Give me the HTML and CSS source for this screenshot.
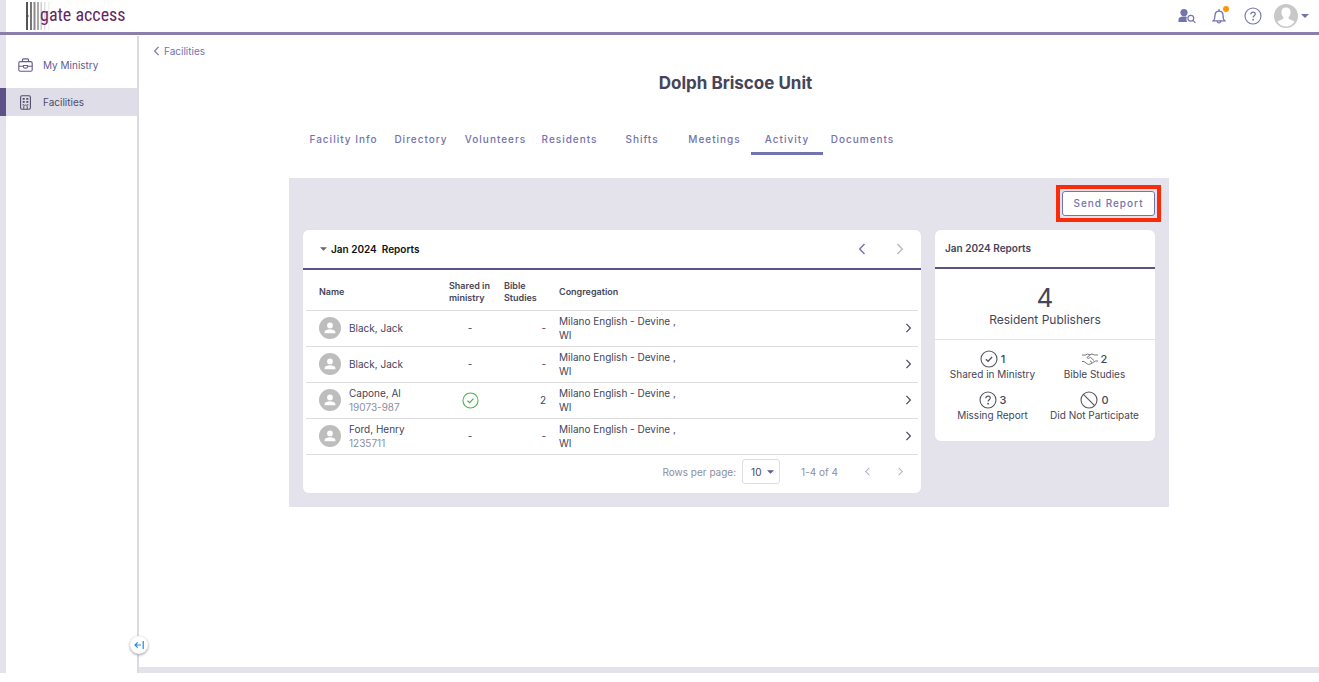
FILE: index.html
```html
<!DOCTYPE html>
<html lang="en">
<head>
<meta charset="utf-8">
<title>Dolph Briscoe Unit - gate access</title>
<link rel="stylesheet" href="styles.css">
</head>
<body>
<svg class="defs" width="0" height="0" aria-hidden="true">
  <symbol id="person" viewBox="0 0 22 22"><circle cx="11" cy="11" r="11" fill="#bdbdbd"/><circle cx="11" cy="8.4" r="2.9" fill="#fff"/><path d="M5.6 16.3v-1.2c0-2 3.6-2.9 5.4-2.9s5.4.9 5.4 2.9v1.2z" fill="#fff"/></symbol>
  <symbol id="left" viewBox="0 0 8 12"><path d="M6.5 1 1.7 6l4.8 5" fill="none" stroke="currentColor" stroke-width="1.4"/></symbol>
  <symbol id="right" viewBox="0 0 8 12"><path d="M1.5 1l4.8 5-4.8 5" fill="none" stroke="currentColor" stroke-width="1.4"/></symbol>
  <symbol id="down" viewBox="0 0 8 4"><path d="M0 0h8L4 4z" fill="currentColor"/></symbol>
  <symbol id="check" viewBox="0 0 18 18"><g fill="none" stroke="currentColor"><circle cx="9" cy="9" r="8" stroke-width="1.1"/><path d="M5.8 9.2l2.3 2.1 4-4.3" stroke-width="1.3"/></g></symbol>
  <symbol id="help" viewBox="0 0 18 18"><g fill="none" stroke="currentColor"><circle cx="9" cy="9" r="8" stroke-width="1.1"/><path d="M6.8 7.3c.1-1.4 1-2.2 2.3-2.2s2.2.8 2.2 1.9c0 1.7-2.2 1.7-2.2 3.5" stroke-width="1.2"/></g><circle cx="9.1" cy="12.7" r=".9" fill="currentColor"/></symbol>
</svg>
<header class="topbar">
  <div class="logo">
    <svg class="logo-bars" width="26" height="28" viewBox="0 0 26 28" aria-hidden="true"><path d="M0 0h2v13l1 1-1 1v13H0z" fill="#555"/><path d="M4 0h2v28H4z" fill="#777"/><path d="M7.500 0h2v28h-2z" fill="#8b8b8b"/><path d="M11 0h2v28h-2z" fill="#aaa"/><path d="M14.500 0h1.500v28h-1.500z" fill="#ccc"/><path d="M18 0h1.500v28H18z" fill="#e0e0e0"/><path d="M22 0h1.500v28H22z" fill="#f0f0f0"/></svg>
    <span class="logo-text">gate access</span>
  </div>
  <div class="actions">
    <button class="icon-button" aria-label="Find person"><svg width="18" height="16" viewBox="0 0 18 16"><circle cx="6" cy="4.600" r="3.600" fill="currentColor"/><path d="M.5 14v-2.400C.5 9.500 2.600 8.600 5 8.600h2.500c.8 0 1.200.2 1.600.5-1 1.600-.8 3.400.1 4.900z" fill="currentColor"/><g fill="none" stroke="currentColor" stroke-width="1.200"><circle cx="12.800" cy="10.300" r="2.900"/><path d="M14.900 12.400l2.500 2.500"/></g></svg></button>
    <button class="icon-button bell" aria-label="Notifications"><svg width="14" height="17" viewBox="0 0 14 17"><path d="M1.200 12.800c1.600-1.200 1.800-2.600 1.800-5.300C3 4.800 4.500 3.100 7 3.100s4 1.700 4 4.400c0 2.700.2 4.100 1.800 5.300zM7 3V1M5.300 13.500c.2 1.900 3.200 1.900 3.400 0" fill="none" stroke="currentColor" stroke-width="1.300"/></svg><span class="dot"></span></button>
    <button class="icon-button" aria-label="Help"><svg width="18" height="18"><use href="#help"/></svg></button>
    <button class="account" aria-label="Account"><svg width="24" height="24" viewBox="0 0 24 24"><circle cx="12" cy="12" r="12" fill="#c8c8c8"/><path d="M12 3.500c3 0 4.600 2 4.600 4.600 0 2-.7 4-2 5.200v1.500l6 2.700c-2 3.500-5 5-8.600 5s-6.600-1.500-8.600-5l6-2.700v-1.500c-1.300-1.200-2-3.200-2-5.200 0-2.600 1.600-4.600 4.600-4.600z" fill="#fff"/></svg><svg width="8" height="4"><use href="#down"/></svg></button>
  </div>
</header>
<div class="shell">
  <nav class="sidebar" aria-label="Main">
    <a class="nav-link" href="#"><svg width="15" height="14" viewBox="0 0 15 14"><g fill="none" stroke="currentColor" stroke-width="1.100"><rect x=".8" y="3.600" width="13.400" height="9.600" rx="1.400"/><path d="M4.500 3.500V2c0-.7.300-1.100 1-1.100h4c.7 0 1 .4 1 1.100v1.500M.8 8.200h4.500m4.400 0h4.500M5.500 7.500h4v1.700c0 1.200-4 1.200-4 0z"/></g></svg>My Ministry</a>
    <a class="nav-link active" href="#"><svg width="15" height="15" viewBox="0 0 15 15"><rect x="2.600" y=".8" width="9.800" height="13.400" rx="1.400" fill="none" stroke="currentColor" stroke-width="1.100"/><path d="M4.700 3h2v1.700h-2zM8.300 3h2v1.700h-2zM4.700 6h2v1.700h-2zM8.300 6h2v1.700h-2zM4.700 9h1v1.500h-1zM9.300 9h1v1.500h-1z" fill="currentColor"/><path d="M5.800 14v-2.500c0-2 3.400-2 3.400 0V14" fill="none" stroke="currentColor"/></svg>Facilities</a>
    <button class="collapse" aria-label="Collapse menu"><svg width="10" height="8" viewBox="0 0 10 8"><path d="M7 4H1m2.700-2.700L1 4l2.700 2.700M9.200 0v8" fill="none" stroke="currentColor" stroke-width="1.200"/></svg></button>
  </nav>
  <main class="main">
    <a class="back" href="#"><svg width="7" height="10"><use href="#left"/></svg>Facilities</a>
    <h1 class="title">Dolph Briscoe Unit</h1>
    <nav class="tabs" aria-label="Facility">
      <a href="#">Facility Info</a><a href="#">Directory</a><a href="#">Volunteers</a><a href="#">Residents</a><a href="#">Shifts</a><a href="#">Meetings</a><a class="current" href="#">Activity</a><a href="#">Documents</a>
    </nav>
    <section class="panel">
      <div class="toolbar"><div class="highlight"><button class="send">Send Report</button></div></div>
      <div class="cards">
        <section class="card reports">
          <div class="card-head">
            <svg class="caret" width="7" height="4"><use href="#down"/></svg>
            <h2>Jan 2024 &nbsp;Reports</h2>
            <button class="month prev" aria-label="Previous month"><svg width="8" height="12"><use href="#left"/></svg></button>
            <button class="month" aria-label="Next month" disabled><svg width="8" height="12"><use href="#right"/></svg></button>
          </div>
          <div class="table-wrap">
            <table>
              <colgroup><col class="c-name"><col class="c-shared"><col class="c-bible"><col class="c-cong"><col></colgroup>
              <thead><tr><th scope="col">Name</th><th scope="col">Shared in<br>ministry</th><th scope="col">Bible<br>Studies</th><th scope="col">Congregation</th><td></td></tr></thead>
              <tbody>
                <tr><td><div class="person"><svg width="22" height="22"><use href="#person"/></svg><span>Black, Jack</span></div></td><td class="shared">-</td><td class="studies">-</td><td>Milano English - Devine ,<br>WI</td><td class="open"><button aria-label="Open"><svg width="7" height="10"><use href="#right"/></svg></button></td></tr>
                <tr><td><div class="person"><svg width="22" height="22"><use href="#person"/></svg><span>Black, Jack</span></div></td><td class="shared">-</td><td class="studies">-</td><td>Milano English - Devine ,<br>WI</td><td class="open"><button aria-label="Open"><svg width="7" height="10"><use href="#right"/></svg></button></td></tr>
                <tr><td><div class="person"><svg width="22" height="22"><use href="#person"/></svg><span>Capone, Al<br><small>19073-987</small></span></div></td><td class="shared"><svg class="green" width="17" height="17"><use href="#check"/></svg></td><td class="studies">2</td><td>Milano English - Devine ,<br>WI</td><td class="open"><button aria-label="Open"><svg width="7" height="10"><use href="#right"/></svg></button></td></tr>
                <tr><td><div class="person"><svg width="22" height="22"><use href="#person"/></svg><span>Ford, Henry<br><small>1235711</small></span></div></td><td class="shared">-</td><td class="studies">-</td><td>Milano English - Devine ,<br>WI</td><td class="open"><button aria-label="Open"><svg width="7" height="10"><use href="#right"/></svg></button></td></tr>
              </tbody>
            </table>
          </div>
          <div class="pager">
            <label for="rows">Rows per page:</label>
            <span class="select"><select id="rows"><option>10</option><option>25</option></select><svg width="7" height="4"><use href="#down"/></svg></span>
            <span class="range">1-4 of 4</span>
            <button aria-label="Previous page" disabled><svg width="7" height="9"><use href="#left"/></svg></button>
            <button aria-label="Next page" disabled><svg width="7" height="9"><use href="#right"/></svg></button>
          </div>
        </section>
        <section class="card summary">
          <div class="card-head"><h2>Jan 2024 Reports</h2></div>
          <div class="total"><strong>4</strong><span>Resident Publishers</span></div>
          <div class="stats">
            <div><p class="count"><svg width="18" height="18"><use href="#check"/></svg>1</p><p>Shared in Ministry</p></div>
            <div><p class="count"><svg width="16" height="12" viewBox="0 0 16 12"><path d="M0 2h3.500l2-1 2.500.8L10 1l2.500 1H16M0 8.500h2l3.500 2.600c1.500.6 3.300 0 4.500-1L13.500 8H16M8 2L5 4.500c.5 1.300 2 1 3.300-.2L12 7.500M10 9.500L8 7.700" fill="none" stroke="currentColor" stroke-width=".8"/></svg>2</p><p>Bible Studies</p></div>
            <div><p class="count"><svg width="18" height="18"><use href="#help"/></svg>3</p><p>Missing Report</p></div>
            <div><p class="count"><svg width="18" height="18" viewBox="0 0 18 18"><g fill="none" stroke="currentColor" stroke-width="1.100"><circle cx="9" cy="9" r="8"/><path d="M3.400 3.400l11.200 11.200"/></g></svg>0</p><p>Did Not Participate</p></div>
          </div>
        </section>
      </div>
    </section>
  </main>
</div>
</body>
</html>
```
FILE: styles.css
```css
* { box-sizing: border-box; }
body { margin: 0; height: 100vh; padding-bottom: 9px; display: flex; flex-direction: column; background: #fff; color: #454559; font: 10px/14px Inter, sans-serif; }
h1, h2, p { margin: 0; }
button { padding: 0; border: 0; background: none; color: inherit; font: inherit; }
a { color: #7373ad; text-decoration: none; }
svg { display: block; flex: none; }
.defs { position: absolute; }

.topbar { display: flex; align-items: center; justify-content: space-between; height: 36px; padding: 0 10px 4px 20px; border-left: 6px solid #e4e3ec; position: relative; }
.topbar::after { content: ""; position: absolute; left: -6px; right: 0; bottom: 1px; height: 3px; background: #8a7fab; }
.logo { display: flex; align-items: center; color: #642464; }
.logo-bars { margin-right: -12px; }
.logo-text { font: 18px/24px "Liberation Sans Narrow", "Roboto Condensed", Roboto, sans-serif; z-index: 1; padding-bottom: 2px; }
.actions { display: flex; align-items: center; gap: 16px; color: #7373ad; }
.bell { position: relative; margin-right: 2px; }
.dot { position: absolute; top: -2px; right: -3px; width: 6px; height: 6px; border-radius: 50%; background: #ff9800; }
.account { display: flex; align-items: center; gap: 3px; margin-left: -4px; }

.shell { flex: 1; display: flex; }
.sidebar { position: relative; width: 139px; padding-top: 15px; border-left: 6px solid #e4e3ec; border-right: 2px solid #dcdce0; }
.nav-link { display: flex; align-items: center; gap: 10px; height: 28px; margin: 0 0 9px -6px; padding-left: 12px; border-left: 6px solid transparent; color: #625a91; }
.nav-link.active { border-color: #5e5188; background: #dfdde8; color: #4f4c68; }
.collapse { position: absolute; right: -11px; bottom: 19px; width: 18px; height: 18px; border-radius: 50%; display: grid; place-items: center; background: #fff; color: #1e88e5; box-shadow: 0 1px 3px #999; }

.main { flex: 1; padding: 8px 150px 0; border-bottom: 6px solid #e4e3ec; }
.back { display: flex; align-items: center; gap: 4px; margin-left: -136px; width: max-content; }
.title { margin-top: 13px; padding-left: 13px; font-size: 17px; line-height: 24px; font-weight: 700; text-align: center; }
.tabs { display: grid; grid-template-columns: 81px 74px 75px 73px 72px 73px 72px 79px; margin: 30px 0 0 14px; }
.tabs a { padding: 7px 0 6px; border-bottom: 3px solid transparent; text-align: center; letter-spacing: 1px; white-space: nowrap; font-weight: 500; }
.tabs .current { border-color: #7373ad; }

.panel { margin-top: 23px; padding: 13px 14px 14px; background: #e4e3ec; }
.toolbar { display: flex; justify-content: flex-end; margin-bottom: 14px; }
.highlight { margin: -6px; padding: 2px; border: 4px solid #fa2a0a; }
.send { display: block; width: 93px; height: 25px; padding-bottom: 1px; border: 1px solid #7373ad; border-radius: 3px; background: #fff; color: #7373ad; letter-spacing: 1px; font-weight: 500; }
.cards { display: flex; align-items: flex-start; gap: 14px; }
.card { border-radius: 6px; background: #fff; }
.card h2 { font-size: 10px; font-weight: 600; }
.reports { flex: 1; }
.card-head { display: flex; align-items: center; height: 40px; border-bottom: 2px solid #5e5188; }
.reports .card-head { padding: 0 17px; color: #111; }
.caret { margin-right: 4px; color: #666; }
.month { color: #bbb; }
.month.prev { margin: 0 30px 0 auto; color: #7373ad; }

.table-wrap { padding: 0 3px; }
table { width: 100%; table-layout: fixed; border-collapse: collapse; }
.c-name { width: 143px; }
.c-shared, .c-bible { width: 55px; }
.c-cong { width: 180px; }
th, td { height: 36px; padding: 0; border-bottom: 1px solid #dedee2; text-align: left; }
th { height: 40px; padding-top: 4px; font-size: 9px; line-height: 12px; font-weight: 600; }
th:first-child, td:first-child { padding-left: 13px; }
.person { display: flex; align-items: center; gap: 8px; }
small { color: #8e8ea2; font-size: 10px; }
.shared { padding-right: 13px; text-align: center; }
.shared svg { margin: 0 auto; }
.green { color: #4caf50; }
.studies { padding-right: 13px; text-align: right; }
.open { padding-right: 6px; }
.open button { display: block; margin-left: auto; }

.pager { display: flex; align-items: center; justify-content: flex-end; height: 38px; padding: 0 17px 4px 0; color: #8e8ea2; }
.select { display: grid; align-items: center; justify-items: end; margin: 0 21px 0 6px; color: #625a91; }
.select select, .select svg { grid-area: 1 / 1; }
.select svg { margin-right: 6px; pointer-events: none; }
select { width: 38px; height: 25px; padding: 0 0 0 8px; appearance: none; border: 1px solid #dedee2; border-radius: 3px; background: #fff; color: #454559; font: inherit; }
.range { margin-right: 26px; }
.pager button { color: #aaaab8; }
.pager button + button { margin-left: 26px; }

.summary { width: 220px; }
.summary .card-head { height: 39px; padding: 0 10px 2px; }
.total { display: grid; justify-items: center; padding: 15px 0 12px; border-bottom: 1px solid #e4e4e8; font-size: 12px; }
.total strong { font-size: 26px; line-height: 28px; font-weight: 400; }
.total span { line-height: 15px; }
.stats { display: grid; grid-template-columns: 103px 1fr; gap: 7px 0; padding: 10px 10px 16px 6px; text-align: center; white-space: nowrap; }
.count { display: flex; align-items: center; justify-content: center; gap: 3px; height: 18px; margin-bottom: -1px; font-size: 11px; font-weight: 500; }
.stats svg { color: #55555f; }
.stats div { padding-bottom: 3px; }
```
